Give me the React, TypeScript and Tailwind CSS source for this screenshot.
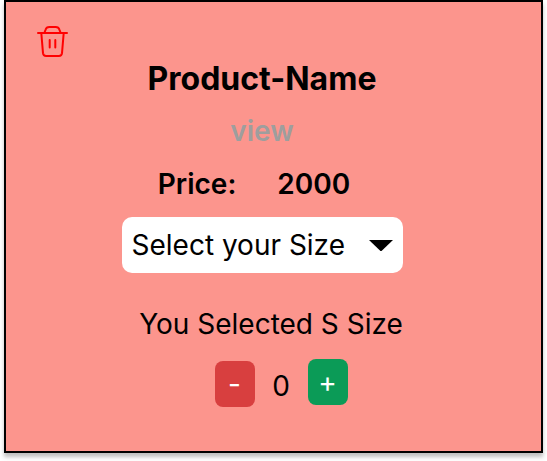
import { useState } from "react";

function TrashIcon() {
  return (
    <svg
      viewBox="0 0 32 32"
      className="h-8 w-8"
      fill="none"
      stroke="#ff0000"
      strokeWidth="2"
      strokeLinecap="round"
      strokeLinejoin="round"
      aria-hidden="true"
    >
      <path d="M1 7h29" />
      <path d="M7.5 6.5l1-2.7Q9.4 1 12.3 1h6.4q2.9 0 3.8 2.8l1 2.7" />
      <path d="M4.3 7l1.7 20.2Q6.3 30 9.1 30h12.8q2.8 0 3.1-2.8L26.7 7" />
      <path d="M12.7 14v7.5M18.3 14v7.5" />
    </svg>
  );
}

export default function App() {
  const [count, setCount] = useState(0);
  const [size, setSize] = useState("");

  return (
    <main className="mx-1 pb-2 font-['Inter',sans-serif] text-[28px] leading-[34px] text-black">
      <article className="flex flex-col border-2 border-black bg-[#fc958d] pt-6 pr-6 pb-11 pl-[31px] shadow-[0_4px_4px_rgba(0,0,0,0.25)]">
        <button type="button" aria-label="Remove product" className="self-start">
          <TrashIcon />
        </button>
        <div className="mr-[30px] flex flex-col items-center">
          <h1 className="text-[32px] leading-[42px] font-bold">Product-Name</h1>
          <a href="#view" className="mt-[14px] font-semibold text-[#9e9e9e]">
            view
          </a>
          <p className="mt-[19px] mr-4 flex gap-[41px] font-semibold">
            <span>Price:</span>
            <span>2000</span>
          </p>
          <div className="mt-4 grid w-[281px] items-center">
            <select
              aria-label="Select your Size"
              value={size}
              onChange={(e) => setSize(e.target.value)}
              className="col-start-1 row-start-1 h-14 w-full appearance-none rounded-[10px] bg-white pr-10 pl-[10px]"
            >
              <option value="">Select your Size</option>
              <option value="S">S</option>
              <option value="M">M</option>
              <option value="L">L</option>
            </select>
            <svg
              viewBox="0 0 24 12"
              className="pointer-events-none col-start-1 row-start-1 mr-[10px] h-3 w-6 justify-self-end"
              aria-hidden="true"
            >
              <path d="M0 1h24L12 12.5z" />
            </svg>
          </div>
          <p className="mt-[34px] ml-[18px]">You Selected {size || "S"} Size</p>
          <div className="mt-[18px] ml-[38px] flex items-end">
            <button
              type="button"
              aria-label="Decrease quantity"
              onClick={() => setCount(Math.max(0, count - 1))}
              className="h-[46px] w-10 rounded-lg bg-[#d83f3f] text-white"
            >
              -
            </button>
            <output className="w-[53px] pb-1 text-center">{count}</output>
            <button
              type="button"
              aria-label="Increase quantity"
              onClick={() => setCount(count + 1)}
              className="mb-[2px] h-[46px] w-10 rounded-lg bg-[#0b9b57] text-white"
            >
              +
            </button>
          </div>
        </div>
      </article>
    </main>
  );
}
